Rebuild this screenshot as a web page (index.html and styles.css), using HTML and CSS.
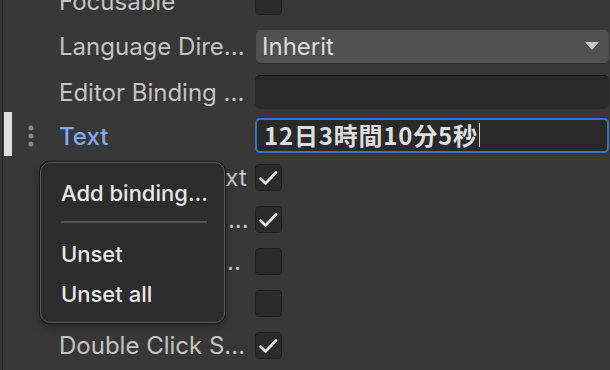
FILE: index.html
```html
<!DOCTYPE html>
<html>
<head>
<meta charset="utf-8">
<link rel="stylesheet" href="styles.css">
</head>
<body>
<div class="panel">
  <div class="row row-focus">
    <div class="gutter"></div>
    <div class="label">Focusable</div>
    <div class="control"><span class="check"></span></div>
  </div>
  <div class="row row-lang">
    <div class="gutter"></div>
    <div class="label">Language Dire...</div>
    <div class="control">
      <div class="dropdown"><span>Inherit</span><svg class="arrow" width="14" height="8" viewBox="0 0 14 8"><path d="M0 0 H14 L7 8 Z" fill="#c4c4c4"/></svg></div>
    </div>
  </div>
  <div class="row row-editor">
    <div class="gutter"></div>
    <div class="label">Editor Binding ...</div>
    <div class="control"><div class="field field-plain"></div></div>
  </div>
  <div class="row row-text">
    <div class="gutter"><span class="bar"></span>
      <svg class="dots" width="6" height="22" viewBox="0 0 6 22"><circle cx="3" cy="3" r="2.5" fill="#8a8a8a"/><circle cx="3" cy="11" r="2.5" fill="#8a8a8a"/><circle cx="3" cy="19" r="2.5" fill="#8a8a8a"/></svg>
    </div>
    <div class="label label-override">Text</div>
    <div class="control"><div class="field field-focus"><span class="value">12日3時間10分5秒</span><span class="caret"></span></div></div>
  </div>
  <div class="row row-check">
    <div class="gutter"></div>
    <div class="label">Enable Rich Text</div>
    <div class="control"><span class="check on"><svg width="27" height="27" viewBox="0 0 27 27"><path d="M5.5 14.5 L10.5 19.5 L21 8.5" fill="none" stroke="#e6e6e6" stroke-width="2.6" stroke-linecap="round" stroke-linejoin="round"/></svg></span></div>
  </div>
  <div class="row row-check">
    <div class="gutter"></div>
    <div class="label">Emoji Fallback ...</div>
    <div class="control"><span class="check on"><svg width="27" height="27" viewBox="0 0 27 27"><path d="M5.5 14.5 L10.5 19.5 L21 8.5" fill="none" stroke="#e6e6e6" stroke-width="2.6" stroke-linecap="round" stroke-linejoin="round"/></svg></span></div>
  </div>
  <div class="row row-check">
    <div class="gutter"></div>
    <div class="label">Parse Escape ...</div>
    <div class="control"><span class="check"></span></div>
  </div>
  <div class="row row-check">
    <div class="gutter"></div>
    <div class="label">Selectable</div>
    <div class="control"><span class="check"></span></div>
  </div>
  <div class="row row-check">
    <div class="gutter"></div>
    <div class="label">Double Click S...</div>
    <div class="control"><span class="check on"><svg width="27" height="27" viewBox="0 0 27 27"><path d="M5.5 14.5 L10.5 19.5 L21 8.5" fill="none" stroke="#e6e6e6" stroke-width="2.6" stroke-linecap="round" stroke-linejoin="round"/></svg></span></div>
  </div>

  <div class="menu">
    <div class="menu-item">Add binding...</div>
    <div class="menu-sep"></div>
    <div class="menu-item">Unset</div>
    <div class="menu-item">Unset all</div>
  </div>
</div>
</body>
</html>
```
FILE: styles.css
```css
html, body {
  margin: 0;
  padding: 0;
  background: #383838;
  overflow: hidden;
  width: 610px;
  height: 370px;
}
.panel {
  position: relative;
  display: flow-root;
  height: 370px;
  margin-left: 2px;
  border-left: 1px solid #232323;
  font-family: Inter, "Noto Sans", sans-serif;
  font-size: 24px;
  color: #c4c4c4;
}
.row {
  display: grid;
  grid-template-columns: 56px 196px 1fr;
  align-items: center;
  margin-right: 1px;
}
.row-focus { height: 44px; margin-top: -21px; }
.row-lang { height: 47px; }
.row-editor { height: 44px; }
.row-text { height: 42px; }
.row-check { height: 42px; }

.gutter {
  height: 100%;
  display: flex;
  align-items: center;
}
.bar {
  width: 8px;
  height: 44px;
  margin-top: -2px;
  margin-left: 1px;
  background: #dedede;
}
.dots {
  margin-left: 16px;
  margin-top: 2px;
}
.label {
  white-space: nowrap;
  overflow: hidden;
}
.label-override {
  color: #80aaf0;
  font-weight: 500;
  padding-top: 3px;
}
.control {
  display: flex;
  align-items: center;
}
.dropdown {
  flex: 1;
  height: 34px;
  margin-left: 1px;
  box-sizing: border-box;
  background: #515151;
  border-radius: 5px;
  border-bottom: 1px solid #2e2e2e;
  display: flex;
  align-items: center;
  justify-content: space-between;
  padding: 0 10px 0 6px;
  color: #dadada;
}
.field {
  flex: 1;
  box-sizing: border-box;
  background: #2a2a2a;
  border-radius: 5px;
}
.field-plain {
  height: 34px;
  border-top: 1px solid #151515;
}
.field-focus {
  height: 35px;
  border: 2px solid #3d74b8;
  display: flex;
  align-items: center;
  padding-left: 7px;
}
.value {
  font-family: "Noto Sans CJK JP", "Noto Sans", sans-serif;
  font-weight: 700;
  font-size: 24px;
  letter-spacing: 0.8px;
  line-height: 30px;
  color: #dedede;
}
.caret {
  width: 1.5px;
  height: 24px;
  background: #cfcfcf;
  margin-left: 1px;
}
.check {
  width: 27px;
  height: 27px;
  box-sizing: border-box;
  background: #2b2b2b;
  border: 1px solid #1f1f1f;
  border-radius: 4px;
  display: block;
  position: relative;
}
.check svg {
  position: absolute;
  left: -1px;
  top: -1px;
}
.menu {
  position: absolute;
  left: 37px;
  top: 162px;
  width: 185px;
  height: 161px;
  box-sizing: border-box;
  background: #2e2d2e;
  border: 1px solid #5c5b5c;
  border-radius: 10px;
  box-shadow: 0 0 0 1px #1c1b1c, 0 4px 10px rgba(0,0,0,0.35);
  padding: 10px 0 0 20px;
  font-size: 22px;
  font-weight: 500;
  color: #e8e8e8;
}
.menu-item {
  height: 40px;
  line-height: 40px;
}
.menu-sep {
  height: 2px;
  width: 146px;
  background: #545354;
  margin: 8px 0 11px;
}
```
